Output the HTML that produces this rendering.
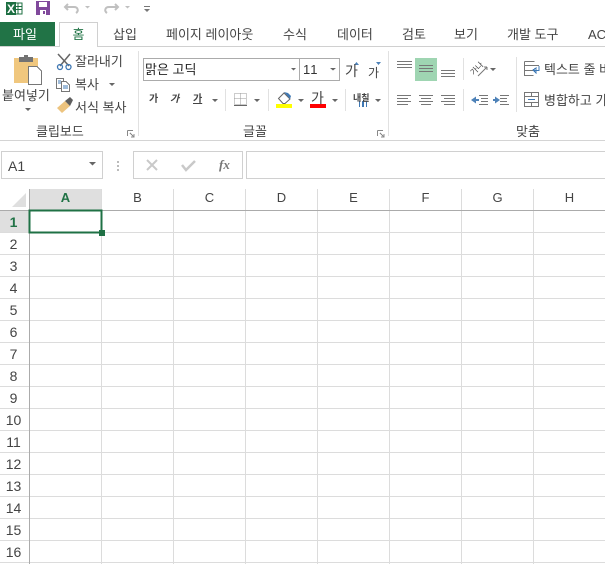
<!DOCTYPE html>
<html lang="ko"><head><meta charset="utf-8"><style>
html,body{margin:0;padding:0;background:#fff}
#p{position:relative;width:605px;height:564px;overflow:hidden;background:#fff;font-family:"Liberation Sans","Noto Sans CJK KR","NanumGothic",sans-serif;color:#444}
.t{position:absolute;white-space:nowrap;line-height:16px;font-size:13px;color:#444}
.c{text-align:center}
.r{font-size:14px}
svg{position:absolute;left:0;top:0}
</style></head><body><div id="p">
<svg width="605" height="564" viewBox="0 0 605 564" shape-rendering="crispEdges">
<!-- title icons -->
<rect x="14" y="3" width="8" height="11" fill="#fff" stroke="#1d6f42"/><path d="M14 6.500H22M14 9.500H22M18 3V14" stroke="#1d6f42" fill="none"/>
<rect x="6" y="2" width="10" height="13" fill="#1d6f42"/>
<rect x="36" y="1" width="14" height="14" fill="#80499c"/><rect x="39" y="2" width="8" height="5" fill="#fff"/><rect x="40" y="10" width="6" height="5" fill="#fff"/><rect x="43" y="11" width="2" height="3" fill="#80499c"/>
<!-- tabs -->
<rect x="0" y="22" width="55" height="25" fill="#217346"/>
<path d="M0 46.500H59.500V22.500H97.500V46.500H605" fill="#fff" stroke="#d0d0d0"/>
<rect x="60" y="45" width="37" height="3" fill="#fff"/>
<rect x="0" y="140" width="605" height="1" fill="#d4d4d4"/>
<!-- group separators -->
<rect x="138" y="51" width="1" height="85" fill="#e1e1e1"/><rect x="388" y="51" width="1" height="85" fill="#e1e1e1"/>
<rect x="225" y="89" width="1" height="22" fill="#e1e1e1"/><rect x="268" y="89" width="1" height="22" fill="#e1e1e1"/><rect x="345" y="89" width="1" height="22" fill="#e1e1e1"/>
<rect x="463" y="58" width="1" height="22" fill="#e1e1e1"/><rect x="463" y="89" width="1" height="22" fill="#e1e1e1"/><rect x="516" y="57" width="1" height="55" fill="#e1e1e1"/>
<!-- clipboard -->
<rect x="14" y="58" width="24" height="25" fill="#f0c77e"/><rect x="19" y="57" width="14" height="5" fill="#737373"/><rect x="24" y="55" width="4" height="3" fill="#737373"/>
<path d="M28.500 66.500H37L41.500 71V84.500H28.500Z" fill="#fff" stroke="#777"/>
<!-- font boxes -->
<rect x="143.500" y="58.500" width="156" height="22" fill="#fff" stroke="#ababab"/>
<rect x="299.500" y="58.500" width="40" height="22" fill="#fff" stroke="#ababab"/>
<!-- fill/font colour bars -->
<rect x="276" y="104" width="16" height="4" fill="#ff0"/><rect x="310" y="104" width="16" height="4" fill="#f00"/>
<!-- bucket -->
<path d="M278.500 98.500L284 93L290 99L285 103.500H283Z" fill="#fff" stroke="#666" shape-rendering="auto"/>
<path d="M284 92L288 93L291 96L290 99Z" fill="#3f78b4" shape-rendering="auto"/>
<!-- borders icon -->
<path d="M234.500 93.500H246.500V104.500H234.500ZM240.500 93.500V104.500M234.500 98.500H246.500" fill="none" stroke="#999" stroke-dasharray="1 1"/>
<rect x="234" y="105" width="13" height="1" fill="#666"/>
<!-- alignment -->
<rect x="415" y="58" width="22" height="23" fill="#9fd5b2"/>
<path d="M397 61.500H412M397 64.500H412M397 67.500H412M419 65.500H433M419 68.500H433M419 71.500H433M441 70.500H455M441 73.500H455M441 76.500H455M397 95.500H411M397 98.500H408M397 101.500H411M397 104.500H408M419 95.500H433M421 98.500H431M419 101.500H433M421 104.500H431M441 95.500H455M444 98.500H455M441 101.500H455M444 104.500H455M479 95.500H488M481 98.500H488M481 101.500H488M479 104.500H488M500 95.500H509M500 98.500H507M500 101.500H507M500 104.500H509" stroke="#777" fill="none"/>
<path d="M471 100L476 96.500V103.500Z M500 100L495 96.500V103.500Z" fill="#4e82b8" shape-rendering="auto"/><rect x="476" y="99" width="3" height="2" fill="#4e82b8"/><rect x="493" y="99" width="2" height="2" fill="#4e82b8"/>
<path d="M478 76L487 67M487 67L484 67M487 67L487 70" stroke="#777" fill="none" shape-rendering="auto"/>
<!-- wrap / merge -->
<path d="M524.500 61.500H534.500M524.500 61.500V75.500H533.500M524.500 65.500H539M524.500 70.500H533.500" stroke="#777" fill="none"/>
<path d="M533 70.500H539V66M533 70L536 68V73Z" stroke="#3d78b5" fill="none"/>
<rect x="524.500" y="92.500" width="14" height="14" fill="none" stroke="#777"/><path d="M525 96.500H538M525 102.500H538M531.500 93V96M531.500 103V106" stroke="#777"/><path d="M528 99.500H535" stroke="#3d78b5"/>
<!-- launchers -->
<path d="M127.500 130.500H133M127.500 130.500V136M130 133L134 137M134 134V137H131" stroke="#888" fill="none"/>
<path d="M377.500 130.500H383M377.500 130.500V136M380 133L384 137M384 134V137H381" stroke="#888" fill="none"/>
<!-- formula bar -->
<rect x="1.500" y="151.500" width="101" height="27" fill="#fff" stroke="#d0d0d0"/>
<rect x="133.500" y="151.500" width="109" height="27" fill="#fff" stroke="#d0d0d0"/>
<rect x="246.500" y="151.500" width="360" height="27" fill="#fff" stroke="#d0d0d0"/>
<path d="M117 161h2v2h-2zM117 165h2v2h-2zM117 169h2v2h-2z" fill="#bbb"/>
<path d="M147 160L157 170M157 160L147 170" stroke="#c9c9c9" stroke-width="2" fill="none" shape-rendering="auto"/>
<path d="M182 165L186 170L195 161" stroke="#c9c9c9" stroke-width="2.500" fill="none" shape-rendering="auto"/>
<!-- small dropdown arrows -->
<path d="M89 162h7l-3.500 3.500z M291 68h5l-2.500 2.500z M330 68h6l-3 2.500z M212 99h6l-3 3z M254 99h6l-3 3z M298 99h6l-3 3z M332 99h6l-3 3z M375 99h6l-3 3z M109 83h6l-3 3z M25 108h6l-3 3z M490 68h6l-3 3z" fill="#666" shape-rendering="auto"/>
<path d="M354 65l2.500-3 2.500 3z M376 62h5l-2.500 3z" fill="#4e82b8" shape-rendering="auto"/>
<!-- scissors, copy, brush -->
<path d="M58 54L69 66M70 54L60 66" stroke="#666" stroke-width="1.500" fill="none" shape-rendering="auto"/>
<circle cx="60" cy="67" r="2.500" fill="none" stroke="#3f78b4" stroke-width="1.300" shape-rendering="auto"/><circle cx="68.500" cy="67" r="2.500" fill="none" stroke="#3f78b4" stroke-width="1.300" shape-rendering="auto"/>
<rect x="56.500" y="78.500" width="7" height="10" fill="#fff" stroke="#777"/><path d="M61.500 81.500H66L69.500 85V91.500H61.500Z" fill="#fff" stroke="#777"/><path d="M63 86H68M63 88H68M58 81H61M58 83H61" stroke="#3f78b4"/>
<path d="M57 108L65 101L70 106L62 113Z" fill="#edc47f" shape-rendering="auto"/><path d="M65 101L70 97L73 100L70 106Z" fill="#5f5f5f" shape-rendering="auto"/>
<!-- 내칠 bars -->
<rect x="359" y="101" width="1" height="6" fill="#3f78b4"/><rect x="362" y="101" width="2" height="6" fill="#3f78b4"/><rect x="366" y="101" width="1" height="6" fill="#3f78b4"/>
<!-- undo/redo -->
<path d="M68 4L65 7L68 10M65 7H74C78 7 79 11 76 13" fill="none" stroke="#c0c0c0" stroke-width="2" shape-rendering="auto"/>
<path d="M115 4L118 7L115 10M118 7H109C105 7 104 11 107 13" fill="none" stroke="#c0c0c0" stroke-width="2" shape-rendering="auto"/>
<path d="M85 6h5l-2.500 2.500zM125 6h5l-2.500 2.500z" fill="#c0c0c0" shape-rendering="auto"/><rect x="144" y="6" width="6" height="1" fill="#777"/><path d="M144 9h6l-3 3z" fill="#777" shape-rendering="auto"/>
<!-- grid -->
<g fill="#dcdcdc">
<rect x="101" y="189" width="1" height="375"/><rect x="173" y="189" width="1" height="375"/><rect x="245" y="189" width="1" height="375"/><rect x="317" y="189" width="1" height="375"/><rect x="389" y="189" width="1" height="375"/><rect x="461" y="189" width="1" height="375"/><rect x="533" y="189" width="1" height="375"/>
<rect x="0" y="232" width="605" height="1"/><rect x="0" y="254" width="605" height="1"/><rect x="0" y="276" width="605" height="1"/><rect x="0" y="298" width="605" height="1"/><rect x="0" y="320" width="605" height="1"/><rect x="0" y="342" width="605" height="1"/><rect x="0" y="364" width="605" height="1"/><rect x="0" y="386" width="605" height="1"/><rect x="0" y="408" width="605" height="1"/><rect x="0" y="430" width="605" height="1"/><rect x="0" y="452" width="605" height="1"/><rect x="0" y="474" width="605" height="1"/><rect x="0" y="496" width="605" height="1"/><rect x="0" y="518" width="605" height="1"/><rect x="0" y="540" width="605" height="1"/><rect x="0" y="562" width="605" height="1"/>
</g>
<rect x="0" y="210" width="605" height="1" fill="#ababab"/>
<rect x="29" y="189" width="1" height="375" fill="#ababab"/>
<rect x="30" y="189" width="71" height="21" fill="#dfdfdf"/><rect x="0" y="211" width="29" height="21" fill="#dfdfdf"/>
<path d="M12 207L26 193V207Z" fill="#dfdfdf" shape-rendering="auto"/>
<rect x="29" y="210" width="73" height="22" fill="#fff" stroke="none"/>
<rect x="29.500" y="210.500" width="72" height="22" fill="none" stroke="#1f7145" stroke-width="2"/>
<rect x="99" y="230" width="6" height="6" fill="#1f7145"/>
</svg>
<span class="t" style="left:7px;top:1px;font-size:12px;font-weight:bold;color:#fff">X</span>
<span class="t c" style="left:0;top:27px;width:50px;color:#fff">파일</span>
<span class="t c" style="left:60px;top:27px;width:37px;color:#217346">홈</span>
<span class="t" style="left:113px;top:27px">삽입</span>
<span class="t" style="left:166px;top:27px">페이지 레이아웃</span>
<span class="t" style="left:283px;top:27px">수식</span>
<span class="t" style="left:337px;top:27px">데이터</span>
<span class="t" style="left:402px;top:27px">검토</span>
<span class="t" style="left:454px;top:27px">보기</span>
<span class="t" style="left:507px;top:27px">개발 도구</span>
<span class="t" style="left:588px;top:27px">AC</span>
<span class="t" style="left:2px;top:88px">붙여넣기</span>
<span class="t" style="left:75px;top:54px">잘라내기</span>
<span class="t" style="left:75px;top:77px">복사</span>
<span class="t" style="left:75px;top:100px">서식 복사</span>
<span class="t" style="left:36px;top:124px">클립보드</span>
<span class="t" style="left:145px;top:62px;color:#222">맑은 고딕</span>
<span class="t" style="left:303px;top:62px;color:#333;letter-spacing:1px">11</span>
<span class="t" style="left:345px;top:63px;font-size:14px">가</span>
<span class="t" style="left:368px;top:65px;font-size:12px">가</span>
<span class="t" style="left:149px;top:92px;font-size:10px;font-weight:bold">가</span>
<span class="t" style="left:170px;top:92px;font-size:10px;font-style:italic;font-weight:bold">가</span>
<span class="t" style="left:193px;top:92px;font-size:10px;font-weight:bold;text-decoration:underline">가</span>
<span class="t" style="left:311px;top:90px;font-size:14px">가</span>
<span class="t" style="left:353px;top:90px;font-size:9px;font-weight:bold">내칠</span>
<span class="t" style="left:470px;top:61px;font-size:8px;transform:rotate(-45deg)">가나</span>
<span class="t" style="left:243px;top:124px">글꼴</span>
<span class="t" style="left:516px;top:124px">맞춤</span>
<span class="t" style="left:544px;top:62px">텍스트 줄 바꿈</span>
<span class="t" style="left:544px;top:93px">병합하고 가운데 맞춤</span>
<span class="t" style="left:8px;top:158px;font-size:14px">A1</span>
<span class="t" style="left:219px;top:157px;font-family:'Liberation Serif',serif;font-style:italic;font-weight:bold;color:#777;font-size:13px">fx</span>
<span class="t c" style="left:30px;top:190px;width:71px;color:#217346;font-weight:bold">A</span>
<span class="t c" style="left:102px;top:190px;width:71px">B</span>
<span class="t c" style="left:174px;top:190px;width:71px">C</span>
<span class="t c" style="left:246px;top:190px;width:71px">D</span>
<span class="t c" style="left:318px;top:190px;width:71px">E</span>
<span class="t c" style="left:390px;top:190px;width:71px">F</span>
<span class="t c" style="left:462px;top:190px;width:71px">G</span>
<span class="t c" style="left:534px;top:190px;width:71px">H</span>
<span class="t c r" style="left:0;top:214px;width:27px;color:#217346;font-weight:bold">1</span>
<span class="t c r" style="left:0;top:236px;width:27px">2</span>
<span class="t c r" style="left:0;top:258px;width:27px">3</span>
<span class="t c r" style="left:0;top:280px;width:27px">4</span>
<span class="t c r" style="left:0;top:302px;width:27px">5</span>
<span class="t c r" style="left:0;top:324px;width:27px">6</span>
<span class="t c r" style="left:0;top:346px;width:27px">7</span>
<span class="t c r" style="left:0;top:368px;width:27px">8</span>
<span class="t c r" style="left:0;top:390px;width:27px">9</span>
<span class="t c r" style="left:0;top:412px;width:27px">10</span>
<span class="t c r" style="left:0;top:434px;width:27px">11</span>
<span class="t c r" style="left:0;top:456px;width:27px">12</span>
<span class="t c r" style="left:0;top:478px;width:27px">13</span>
<span class="t c r" style="left:0;top:500px;width:27px">14</span>
<span class="t c r" style="left:0;top:522px;width:27px">15</span>
<span class="t c r" style="left:0;top:544px;width:27px">16</span>
</div></body></html>
